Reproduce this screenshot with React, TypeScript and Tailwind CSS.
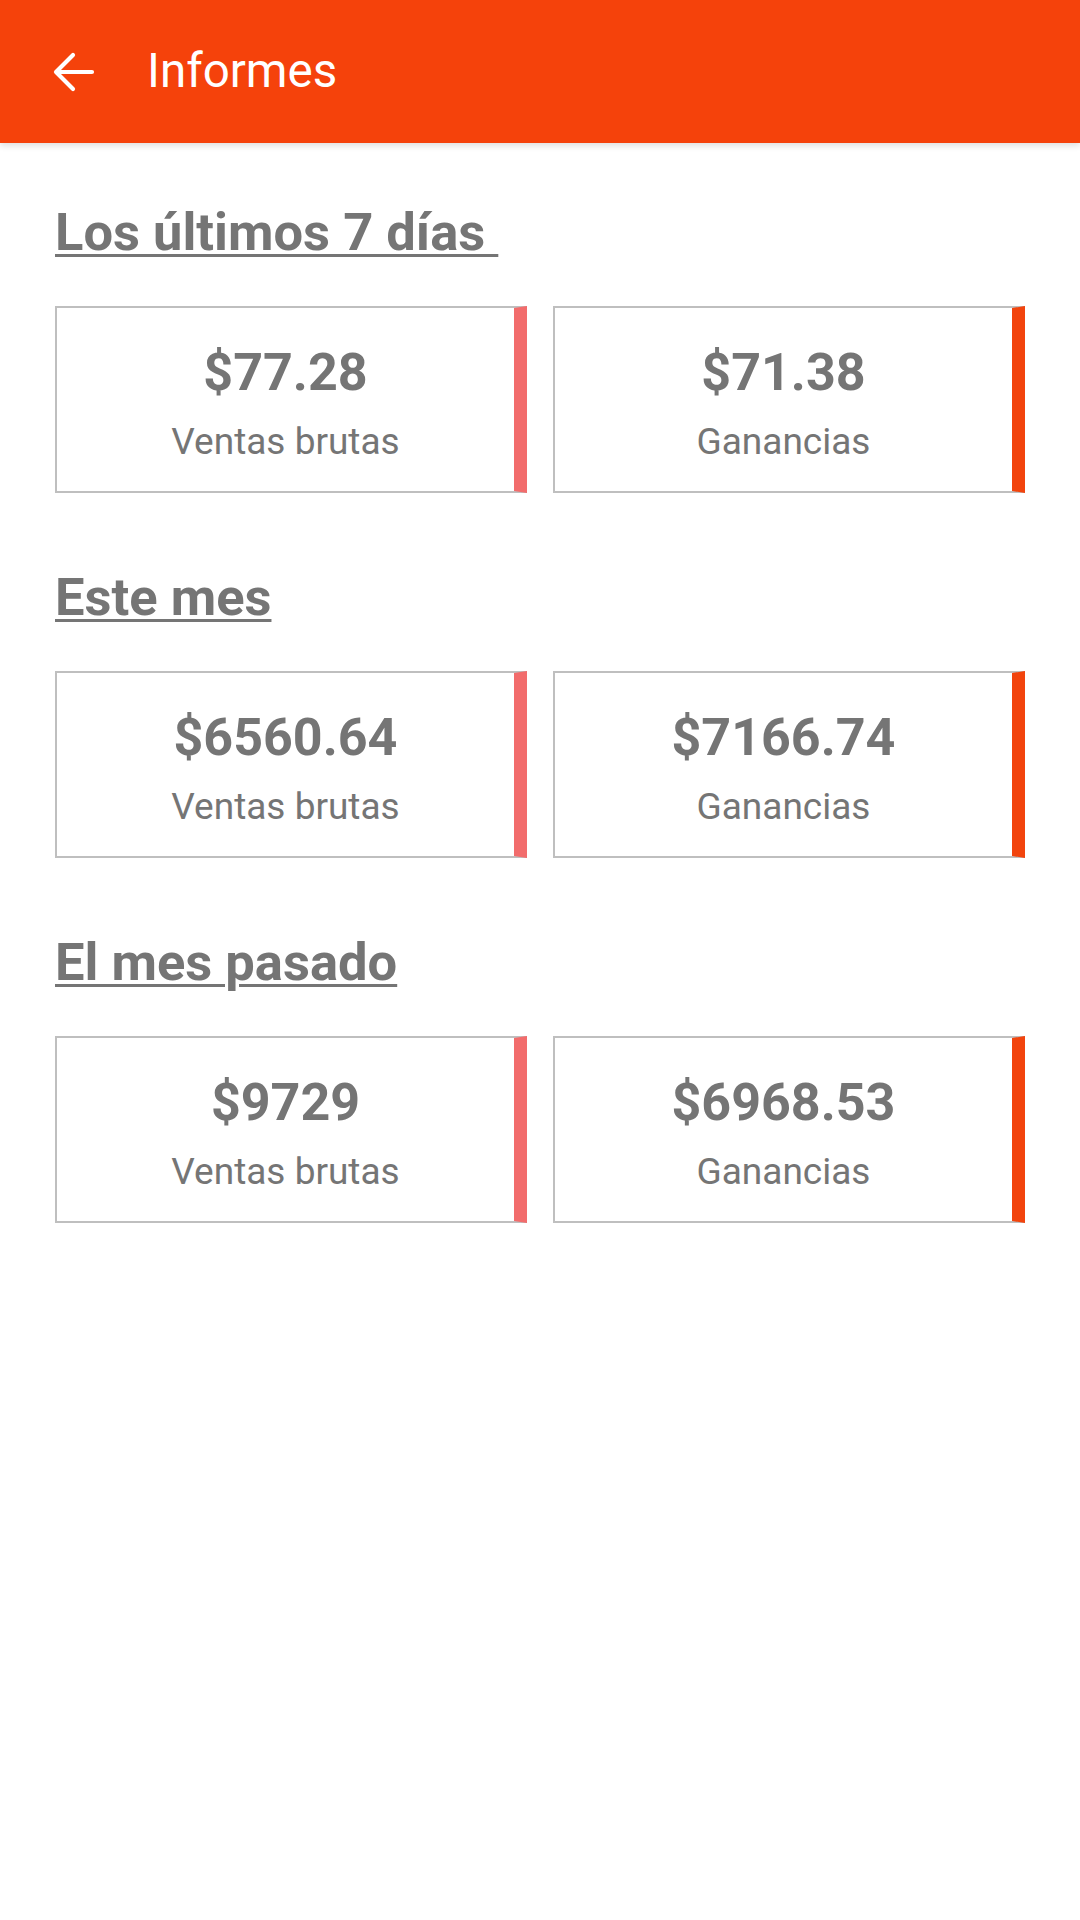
import React from "react";

type Stat = { amount: string; label: string; accent: "red" | "orange" };

const sections: { title: string; stats: Stat[] }[] = [
  {
    title: "Los últimos 7 días\u00a0",
    stats: [
      { amount: "$77.28", label: "Ventas brutas", accent: "red" },
      { amount: "$71.38", label: "Ganancias", accent: "orange" },
    ],
  },
  {
    title: "Este mes",
    stats: [
      { amount: "$6560.64", label: "Ventas brutas", accent: "red" },
      { amount: "$7166.74", label: "Ganancias", accent: "orange" },
    ],
  },
  {
    title: "El mes pasado",
    stats: [
      { amount: "$9729", label: "Ventas brutas", accent: "red" },
      { amount: "$6968.53", label: "Ganancias", accent: "orange" },
    ],
  },
];

function StatCard({ stat }: { stat: Stat }) {
  return (
    <div
      className={
        "h-[187px] flex flex-col items-center bg-white border-[2px] border-[#bfbfbf] pt-[34px] " +
        (stat.accent === "red"
          ? "border-r-[13px] border-r-[#f26c6c]"
          : "border-r-[13px] border-r-[#f2440d]")
      }
    >
      <div className="text-[52px] leading-[61px] font-bold text-[#757575]">{stat.amount}</div>
      <div className="mt-[17px] text-[37px] leading-[43px] text-[#757575]">{stat.label}</div>
    </div>
  );
}

export default function App() {
  return (
    <div
      className="w-[1080px] min-h-[1920px] bg-white"
      style={{ fontFamily: "Roboto, 'Liberation Sans', sans-serif" }}
    >
      <header className="h-[143px] bg-[#f5420b] flex items-center shadow-[0_3px_6px_rgba(0,0,0,0.12)]">
        <div className="w-[147px] flex items-center pl-[52px]">
          <svg width="44" height="44" viewBox="0 0 44 44" fill="none">
            <path
              d="M40 22H4M4 22L21 5M4 22L21 39"
              stroke="white"
              strokeWidth="4.2"
              strokeLinecap="round"
              strokeLinejoin="round"
            />
          </svg>
        </div>
        <h1 className="text-[47.5px] leading-[55px] text-white font-normal">Informes</h1>
      </header>

      <main className="px-[55px] pt-[59px]">
        {sections.map((s, i) => (
          <section key={i} className={i > 0 ? "mt-[74px]" : ""}>
            <h2 className="text-[52.5px] leading-[61px] font-bold text-[#757575] underline decoration-[3px] underline-offset-[4px] whitespace-pre">
              {s.title}
            </h2>
            <div className="mt-[43px] grid grid-cols-2 gap-[26px]">
              {s.stats.map((st, j) => (
                <StatCard key={j} stat={st} />
              ))}
            </div>
          </section>
        ))}
      </main>
    </div>
  );
}
